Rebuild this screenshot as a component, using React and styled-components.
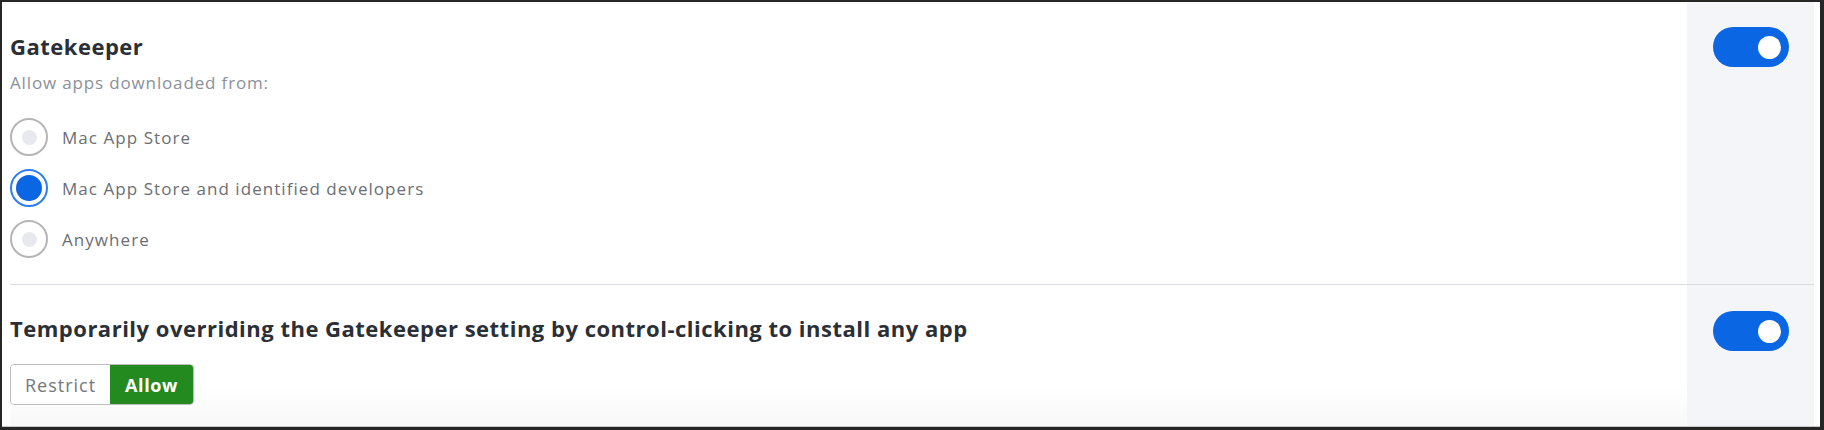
import React, { useState } from "react";
import styled, { createGlobalStyle } from "styled-components";

const Global = createGlobalStyle`
  html, body { margin: 0; padding: 0; background: #262626; }
  body { font-family: "Open Sans", "Liberation Sans", sans-serif; }
  * { box-sizing: border-box; }
`;

const Frame = styled.div`
  width: 1824px;
  height: 430px;
  padding: 2px 4px 3px 2px;
  background: #262626;
`;

const Window = styled.div`
  height: 425px;
  background: #ffffff;
  border-bottom: 1px solid #c9c9c9;
  padding: 0 6px 0 8px;
  display: grid;
  grid-template-columns: 1fr 127px;
  grid-template-rows: 282px 1fr;
`;

const Main = styled.div`
  padding: ${(p) => p.$pad};
  border-top: ${(p) => (p.$divided ? "1px solid #d9dbe0" : "none")};
  background: ${(p) =>
    p.$fade ? "linear-gradient(to bottom, #ffffff 70%, #f8f8f9 100%)" : "#ffffff"};
  display: flex;
  flex-direction: column;
`;

const Side = styled.div`
  background: #f3f5f9;
  border-top: ${(p) => (p.$divided ? "1px solid #d9dbe0" : "none")};
  display: flex;
  justify-content: center;
  padding-top: ${(p) => p.$top}px;
`;

const Title = styled.h2`
  margin: 0;
  font-size: 22px;
  line-height: 28px;
  letter-spacing: 0.5px;
  font-weight: 700;
  color: #2b2f36;
`;

const Subtitle = styled.p`
  margin: 13px 0 0;
  font-size: 17px;
  line-height: 20px;
  letter-spacing: 0.85px;
  color: #8b9099;
`;

const RadioList = styled.div`
  margin-top: 25px;
  display: flex;
  flex-direction: column;
  gap: 13px;
`;

const RadioRow = styled.label`
  display: flex;
  align-items: center;
  gap: 14px;
  cursor: pointer;
`;

const RadioCircle = styled.span`
  width: 38px;
  height: 38px;
  border-radius: 50%;
  border: 2px solid ${(p) => (p.$on ? "#2f7ff0" : "#b5b5b5")};
  display: flex;
  align-items: center;
  justify-content: center;
  background: #fff;
  flex: none;
  &::after {
    content: "";
    width: ${(p) => (p.$on ? 26 : 15)}px;
    height: ${(p) => (p.$on ? 26 : 15)}px;
    border-radius: 50%;
    background: ${(p) => (p.$on ? "#0b66e4" : "#e7e9ee")};
  }
`;

const RadioLabel = styled.span`
  font-size: 17px;
  letter-spacing: 1.05px;
  color: #6b6e74;
`;

const Toggle = styled.button`
  width: 76px;
  height: 40px;
  border: none;
  border-radius: 20px;
  background: ${(p) => (p.$on ? "#0b66e4" : "#c4c8cf")};
  padding: 0 8px;
  display: flex;
  align-items: center;
  justify-content: ${(p) => (p.$on ? "flex-end" : "flex-start")};
  cursor: pointer;
  &::after {
    content: "";
    width: 23px;
    height: 23px;
    border-radius: 50%;
    background: #ffffff;
  }
`;

const Segmented = styled.div`
  margin-top: 22px;
  display: inline-flex;
  align-self: flex-start;
  height: 41px;
  border: 1px solid #bdbdbd;
  border-radius: 4px;
  overflow: hidden;
`;

const Segment = styled.button`
  border: none;
  margin: 0;
  padding: 0;
  width: ${(p) => p.$w}px;
  font-family: inherit;
  font-size: 18px;
  letter-spacing: ${(p) => (p.$active ? 0.6 : 1)}px;
  font-weight: ${(p) => (p.$active ? 700 : 400)};
  color: ${(p) => (p.$active ? "#ffffff" : "#75787d")};
  background: ${(p) => (p.$active ? "#238a1f" : "#ffffff")};
  cursor: pointer;
`;

const options = [
  "Mac App Store",
  "Mac App Store and identified developers",
  "Anywhere",
];

export default function App() {
  const [choice, setChoice] = useState(1);
  const [gk, setGk] = useState(true);
  const [ov, setOv] = useState(true);
  const [mode, setMode] = useState("allow");
  return (
    <>
      <Global />
      <Frame>
        <Window>
          <Main $pad="30px 0 0 0">
            <Title>Gatekeeper</Title>
            <Subtitle>Allow apps downloaded from:</Subtitle>
            <RadioList>
              {options.map((o, i) => (
                <RadioRow key={o} onClick={() => setChoice(i)}>
                  <RadioCircle $on={choice === i} />
                  <RadioLabel>{o}</RadioLabel>
                </RadioRow>
              ))}
            </RadioList>
          </Main>
          <Side $top={25}>
            <Toggle $on={gk} onClick={() => setGk(!gk)} aria-label="Gatekeeper" />
          </Side>
          <Main $pad="29px 0 0 0" $divided $fade>
            <Title>
              Temporarily overriding the Gatekeeper setting by control-clicking to install any app
            </Title>
            <Segmented>
              <Segment $w={99} $active={mode === "restrict"} onClick={() => setMode("restrict")}>
                Restrict
              </Segment>
              <Segment $w={83} $active={mode === "allow"} onClick={() => setMode("allow")}>
                Allow
              </Segment>
            </Segmented>
          </Main>
          <Side $top={26} $divided>
            <Toggle $on={ov} onClick={() => setOv(!ov)} aria-label="Override" />
          </Side>
        </Window>
      </Frame>
    </>
  );
}
